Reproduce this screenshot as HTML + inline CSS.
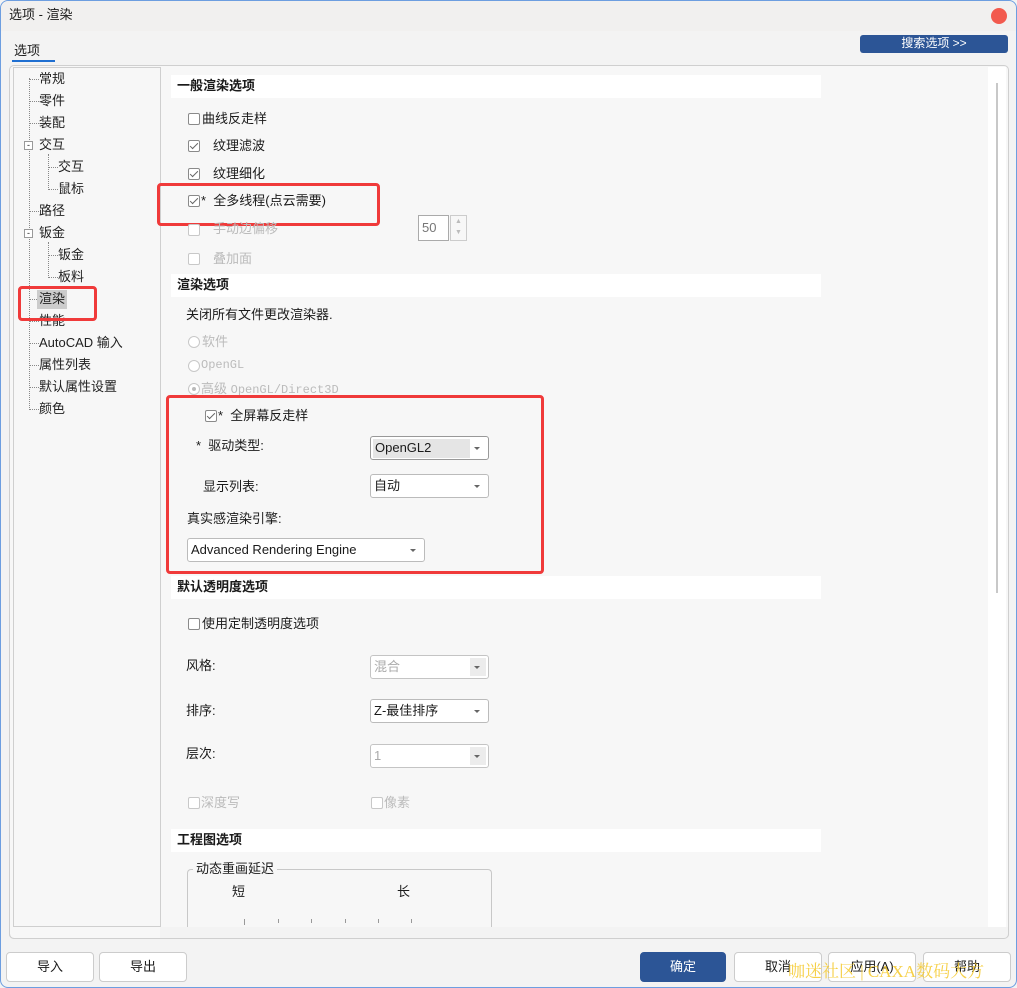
<!DOCTYPE html>
<html><head><meta charset="utf-8"><style>
*{margin:0;padding:0;box-sizing:border-box}
body{width:1017px;height:988px;background:#f3f3f3;font-family:"Liberation Sans","Noto Sans CJK SC",sans-serif;font-size:13px;line-height:1.3;color:#1a1a1a;position:relative;overflow:hidden}
.a{position:absolute;white-space:nowrap}
.win{position:absolute;left:0;top:0;width:1017px;height:988px;border:1px solid #6d9ee0;border-radius:8px;background:#f3f3f3}
.title{position:absolute;left:1px;top:1px;width:1015px;height:30px;background:#f1f0ef;border-radius:8px 8px 0 0}
.cb{position:absolute;width:12px;height:12px;border:1px solid #8a8a8a;border-radius:2px;background:#fff}
.cb.dis{border-color:#c8c8c8}
.ck::after{content:"";position:absolute;left:3px;top:0px;width:3px;height:7px;border:solid #666;border-width:0 1.5px 1.5px 0;transform:rotate(45deg)}
.rd{position:absolute;width:12px;height:12px;border:1px solid #c8c8c8;border-radius:50%;background:#fff}
.hdr{position:absolute;left:171px;width:650px;height:23px;background:#fff;font-weight:bold;font-size:13px;padding:3px 0 0 6px}
.sel{position:absolute;height:24px;border:1px solid #bbb;border-radius:3px;background:#fff;padding:3px 0 0 3px}
.sel::after{content:"";position:absolute;right:8px;top:10px;border:3px solid transparent;border-top:3px solid #666}
.sel.d{color:#aaa;border-color:#c4c4c4}
.sel.d::before{content:"";position:absolute;right:2px;top:2px;width:16px;height:18px;background:#ececec}
.red{position:absolute;border:3px solid #f03a3a;border-radius:4px}
.tree{color:#222}
.dot{position:absolute;border-top:1px dotted #888;width:10px}
.vdot{position:absolute;border-left:1px dotted #888}
.btn{position:absolute;top:952px;height:30px;border:1px solid #ccc;border-radius:4px;background:#fff;text-align:center;padding-top:6px}
.g{color:#bbb}
.mono{font-family:'Liberation Mono',monospace;font-size:12px}
</style></head><body>
<div class="win"></div>
<div class="title"></div>
<div class="a" style="left:9px;top:7px;font-size:13px">选项 - 渲染</div>
<div class="a" style="left:991px;top:8px;width:16px;height:16px;border-radius:50%;background:#f25a4e"></div>
<div class="a" style="left:14px;top:43px">选项</div>
<div class="a" style="left:12px;top:60px;width:43px;height:2px;background:#1f6fd1"></div>
<div class="a" style="left:860px;top:35px;width:148px;height:18px;background:#2c5596;border-radius:3px;color:#fff;font-size:12px;text-align:center;padding-top:1px">搜索选项 &gt;&gt;</div>

<div class="a" style="left:9px;top:65px;width:1000px;height:874px;border:1px solid #cfcfcf;border-radius:5px;background:#f7f7f7"></div>
<div class="a" style="left:13px;top:67px;width:148px;height:860px;border:1px solid #cfcfcf;background:#f7f7f7"></div>
<div class="a" style="left:988px;top:67px;width:18px;height:860px;background:#fff"></div>
<div class="a" style="left:996px;top:83px;width:2px;height:510px;background:#c8c8c8"></div>

<!-- tree -->
<div class="vdot" style="left:29px;top:78px;height:332px"></div>
<div class="vdot" style="left:48px;top:154px;height:36px"></div>
<div class="vdot" style="left:48px;top:242px;height:36px"></div>
<div class="tree">
<div class="dot" style="left:29px;top:79px"></div><div class="a" style="left:39px;top:71px">常规</div>
<div class="dot" style="left:29px;top:101px"></div><div class="a" style="left:39px;top:93px">零件</div>
<div class="dot" style="left:29px;top:123px"></div><div class="a" style="left:39px;top:115px">装配</div>
<div class="a" style="left:24px;top:141px;width:9px;height:9px;border:1px solid #999;background:#fff;font-size:9px;line-height:6px;text-align:center">-</div><div class="a" style="left:39px;top:137px">交互</div>
<div class="dot" style="left:48px;top:167px"></div><div class="a" style="left:58px;top:159px">交互</div>
<div class="dot" style="left:48px;top:189px"></div><div class="a" style="left:58px;top:181px">鼠标</div>
<div class="dot" style="left:29px;top:211px"></div><div class="a" style="left:39px;top:203px">路径</div>
<div class="a" style="left:24px;top:229px;width:9px;height:9px;border:1px solid #999;background:#fff;font-size:9px;line-height:6px;text-align:center">-</div><div class="a" style="left:39px;top:225px">钣金</div>
<div class="dot" style="left:48px;top:255px"></div><div class="a" style="left:58px;top:247px">钣金</div>
<div class="dot" style="left:48px;top:277px"></div><div class="a" style="left:58px;top:269px">板料</div>
<div class="dot" style="left:29px;top:299px"></div><div class="a" style="left:37px;top:290px;background:#ccc;padding:1px 2px">渲染</div>
<div class="dot" style="left:29px;top:321px"></div><div class="a" style="left:39px;top:313px">性能</div>
<div class="dot" style="left:29px;top:343px"></div><div class="a" style="left:39px;top:335px">AutoCAD 输入</div>
<div class="dot" style="left:29px;top:365px"></div><div class="a" style="left:39px;top:357px">属性列表</div>
<div class="dot" style="left:29px;top:387px"></div><div class="a" style="left:39px;top:379px">默认属性设置</div>
<div class="dot" style="left:29px;top:409px"></div><div class="a" style="left:39px;top:401px">颜色</div>
</div>
<div class="red" style="left:18px;top:286px;width:79px;height:35px"></div>

<!-- content -->
<div class="hdr" style="top:75px">一般渲染选项</div>
<div class="cb" style="left:188px;top:113px"></div><div class="a" style="left:202px;top:111px">曲线反走样</div>
<div class="cb ck" style="left:188px;top:140px"></div><div class="a" style="left:213px;top:138px">纹理滤波</div>
<div class="cb ck" style="left:188px;top:168px"></div><div class="a" style="left:213px;top:166px">纹理细化</div>
<div class="cb ck" style="left:188px;top:195px"></div><div class="a" style="left:201px;top:193px">*&nbsp; 全多线程(点云需要)</div>
<div class="red" style="left:157px;top:183px;width:223px;height:43px"></div>
<div class="cb dis" style="left:188px;top:224px"></div><div class="a g" style="left:213px;top:221px">手动边偏移</div>
<div class="a" style="left:418px;top:215px;width:31px;height:26px;border:1px solid #aaa;background:#fff;color:#777;padding:4px 0 0 3px">50</div>
<div class="a" style="left:450px;top:215px;width:17px;height:26px;border:1px solid #ccc;color:#bbb;font-size:7px;text-align:center;line-height:11px">▲<br>▼</div>
<div class="cb dis" style="left:188px;top:253px"></div><div class="a g" style="left:213px;top:251px">叠加面</div>

<div class="hdr" style="top:274px">渲染选项</div>
<div class="a" style="left:186px;top:307px">关闭所有文件更改渲染器.</div>
<div class="rd" style="left:188px;top:336px"></div><div class="a g" style="left:202px;top:334px">软件</div>
<div class="rd" style="left:188px;top:360px"></div><div class="a g mono" style="left:201px;top:358px">OpenGL</div>
<div class="rd" style="left:188px;top:383px"><div style="position:absolute;left:3px;top:3px;width:4px;height:4px;border-radius:50%;background:#bbb"></div></div><div class="a g" style="left:201px;top:381px">高级 <span class="mono">OpenGL/Direct3D</span></div>

<div class="cb ck" style="left:205px;top:410px"></div><div class="a" style="left:218px;top:408px">*&nbsp; 全屏幕反走样</div>
<div class="a" style="left:196px;top:438px">*&nbsp; 驱动类型:</div>
<div class="sel" style="left:370px;top:436px;width:119px;border-color:#999;padding:2px 0 0 2px"><span style="background:#e5e5e5;display:inline-block;width:97px;height:19px;padding:1px 0 0 2px">OpenGL2</span></div>
<div class="a" style="left:203px;top:479px">显示列表:</div>
<div class="sel" style="left:370px;top:474px;width:119px">自动</div>
<div class="a" style="left:187px;top:511px">真实感渲染引擎:</div>
<div class="sel" style="left:187px;top:538px;width:238px">Advanced Rendering Engine</div>
<div class="red" style="left:166px;top:395px;width:378px;height:179px"></div>

<div class="hdr" style="top:576px">默认透明度选项</div>
<div class="cb" style="left:188px;top:618px"></div><div class="a" style="left:202px;top:616px">使用定制透明度选项</div>
<div class="a" style="left:186px;top:658px">风格:</div>
<div class="sel d" style="left:370px;top:655px;width:119px">混合</div>
<div class="a" style="left:186px;top:703px">排序:</div>
<div class="sel" style="left:370px;top:699px;width:119px">Z-最佳排序</div>
<div class="a" style="left:186px;top:746px">层次:</div>
<div class="sel d" style="left:370px;top:744px;width:119px">1</div>
<div class="cb dis" style="left:188px;top:797px"></div><div class="a g" style="left:201px;top:795px">深度写</div>
<div class="cb dis" style="left:371px;top:797px"></div><div class="a g" style="left:384px;top:795px">像素</div>

<div class="hdr" style="top:829px">工程图选项</div>
<div class="a" style="left:187px;top:869px;width:305px;height:70px;border:1px solid #c8c8c8;border-bottom:none;border-radius:4px 4px 0 0"></div>
<div class="a" style="left:193px;top:861px;background:#f7f7f7;padding:0 3px">动态重画延迟</div>
<div class="a" style="left:232px;top:884px">短</div>
<div class="a" style="left:397px;top:884px">长</div>
<div class="a" style="left:244px;top:919px;width:1px;height:6px;background:#999"></div>
<div class="a" style="left:278px;top:919px;width:1px;height:4px;background:#999"></div>
<div class="a" style="left:311px;top:919px;width:1px;height:4px;background:#999"></div>
<div class="a" style="left:345px;top:919px;width:1px;height:4px;background:#999"></div>
<div class="a" style="left:378px;top:919px;width:1px;height:4px;background:#999"></div>
<div class="a" style="left:411px;top:919px;width:1px;height:4px;background:#999"></div>
<div class="a" style="left:160px;top:927px;width:848px;height:12px;background:#f3f3f3"></div>
<div class="a" style="left:9px;top:926px;width:1000px;height:13px;border:1px solid #cfcfcf;border-top:none;border-radius:0 0 5px 5px"></div>

<!-- buttons -->
<div class="btn" style="left:6px;width:88px">导入</div>
<div class="btn" style="left:99px;width:88px">导出</div>
<div class="btn" style="left:640px;width:86px;background:#2c5596;border-color:#2c5596;color:#fff">确定</div>
<div class="btn" style="left:734px;width:88px">取消</div>
<div class="btn" style="left:828px;width:88px">应用(A)</div>
<div class="btn" style="left:923px;width:88px">帮助</div>
<div class="a" style="left:788px;top:961px;font-size:17px;color:rgba(245,200,40,0.85);font-family:'Liberation Serif','Noto Serif CJK SC',serif">咖迷社区 | CAXA数码大方</div>
</body></html>
